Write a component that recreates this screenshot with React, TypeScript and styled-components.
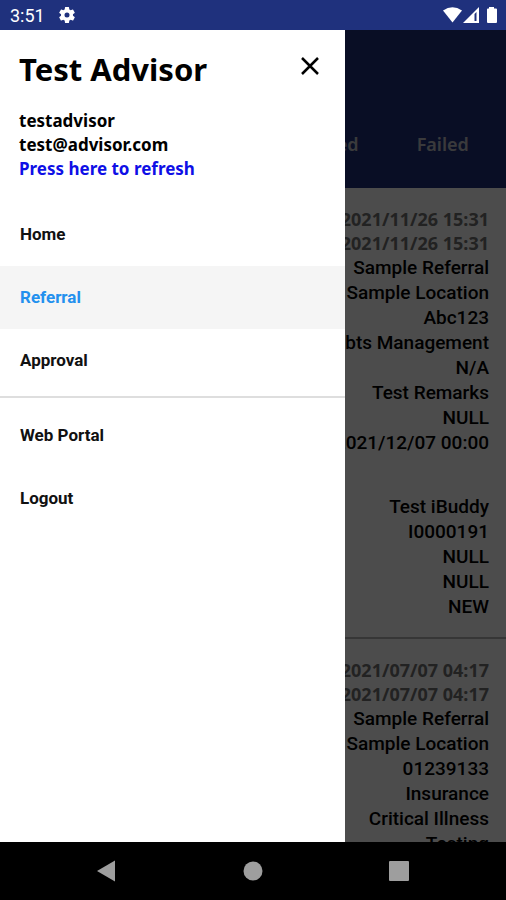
import React from "react";
import styled, { createGlobalStyle } from "styled-components";

const GlobalStyle = createGlobalStyle`
  * { box-sizing: border-box; }
  body { margin: 0; font-family: Roboto, sans-serif; color: #000; }
  h1, p, ul { margin: 0; padding: 0; }
  ul { list-style: none; }
  button { border: 0; padding: 0; background: none; font: inherit; color: inherit; cursor: pointer; }
`;

const Screen = styled.div`
  display: flex;
  flex-direction: column;
  height: 100vh;
  overflow: hidden;
`;

const StatusBar = styled.header`
  flex: none;
  display: flex;
  align-items: center;
  justify-content: space-between;
  height: 30px;
  padding: 0 8px 0 10px;
  background: #1f317d;
  color: #fff;
  font-size: 18px;
`;

const StatusGroup = styled.div<{ $gap: number }>`
  display: flex;
  align-items: center;
  gap: ${(p) => p.$gap}px;
`;

const Stage = styled.div`
  flex: 1;
  min-height: 0;
  display: grid;
  grid-template: minmax(0, 1fr) / minmax(0, 1fr);
`;

const Page = styled.main`
  grid-area: 1 / 1;
  overflow: hidden;
  background: #fff;
`;

const TabBar = styled.div`
  display: grid;
  grid-template-columns: repeat(4, 1fr);
  align-items: end;
  height: 158px;
  padding-bottom: 32px;
  background: #1f317d;
`;

const Tab = styled.button`
  color: #c4c4c8;
  font-family: "Noto Sans", sans-serif;
  font-size: 18px;
  font-weight: 600;
  line-height: 24px;
`;

const Record = styled.article`
  padding: 19px 17px 18px;
  border-bottom: 2px solid #b4b4b4;
  text-align: right;
`;

const Stamp = styled.p`
  color: #737373;
  font-family: "Noto Sans", sans-serif;
  font-size: 18px;
  font-weight: 700;
  line-height: 24px;
`;

const Values = styled.ul`
  font-size: 19px;
  font-weight: 500;
  line-height: 25px;

  & + & { margin-top: 39px; }
`;

const Backdrop = styled.div`
  grid-area: 1 / 1;
  z-index: 1;
  background: rgba(0, 0, 0, 0.7);
`;

const Drawer = styled.aside`
  grid-area: 1 / 1;
  z-index: 2;
  width: 68.2%;
  background: #fff;
`;

const DrawerHead = styled.div`
  display: flex;
  align-items: center;
  justify-content: space-between;
  padding: 16px 22px 0 19px;
`;

const Title = styled.h1`
  font-family: "Noto Sans", sans-serif;
  font-size: 31px;
  font-weight: 700;
  line-height: 46px;
`;

const CloseButton = styled.button`
  display: flex;
  padding-bottom: 6px;
`;

const Account = styled.div`
  display: flex;
  flex-direction: column;
  align-items: flex-start;
  padding: 17px 19px 22px;
  font-family: "Noto Sans", sans-serif;
  font-size: 17px;
  font-weight: 700;
  line-height: 24px;
`;

const RefreshButton = styled.button`
  color: #0f0fe6;
`;

const Menu = styled.nav`
  & + & {
    margin-top: 4px;
    padding-top: 6px;
    border-top: 2px solid #dedede;
  }
`;

const MenuLink = styled.a<{ $active?: boolean }>`
  display: block;
  padding: 20px;
  background: ${(p) => (p.$active ? "#f5f5f5" : "transparent")};
  color: ${(p) => (p.$active ? "#2390ee" : "#111")};
  font-size: 17px;
  font-weight: 700;
  line-height: 23px;
  text-decoration: none;
`;

const SystemNav = styled.footer`
  flex: none;
  display: flex;
  align-items: center;
  justify-content: center;
  gap: 126px;
  height: 58px;
  background: #000;
`;

const SystemButton = styled.button`
  display: flex;
`;

const records = [
  {
    stamps: ["2021/11/26 15:31", "2021/11/26 15:31"],
    groups: [
      ["Sample Referral", "Sample Location", "Abc123", "Debts Management", "N/A", "Test Remarks", "NULL", "2021/12/07 00:00"],
      ["Test iBuddy", "I0000191", "NULL", "NULL", "NEW"],
    ],
  },
  {
    stamps: ["2021/07/07 04:17", "2021/07/07 04:17"],
    groups: [["Sample Referral", "Sample Location", "01239133", "Insurance", "Critical Illness", "Testing"]],
  },
];

const GearIcon = () => (
  <svg width="20" height="20" viewBox="0 0 24 24" fill="#fff" aria-hidden="true">
    <path d="M19.14 12.94c.04-.3.06-.61.06-.94s-.02-.64-.07-.94l2.03-1.58a.49.49 0 0 0 .12-.61l-1.92-3.32a.49.49 0 0 0-.59-.22l-2.39.96a7 7 0 0 0-1.62-.94l-.36-2.54a.48.48 0 0 0-.48-.41h-3.84a.47.47 0 0 0-.47.41l-.36 2.54c-.59.24-1.13.57-1.62.94l-2.39-.96a.48.48 0 0 0-.59.22L2.74 8.87a.47.47 0 0 0 .12.61l2.03 1.58c-.05.3-.09.63-.09.94s.02.64.07.94l-2.03 1.58a.49.49 0 0 0-.12.61l1.92 3.32c.12.22.37.29.59.22l2.39-.96c.5.38 1.03.7 1.62.94l.36 2.54c.05.24.24.41.48.41h3.84c.24 0 .44-.17.47-.41l.36-2.54a7 7 0 0 0 1.62-.94l2.39.96c.22.08.47 0 .59-.22l1.92-3.32a.47.47 0 0 0-.12-.61zM12 15a3 3 0 1 1 0-6 3 3 0 0 1 0 6z" />
  </svg>
);

const StatusIcons = () => (
  <svg width="56" height="20" viewBox="0 0 56 20" fill="#fff" aria-hidden="true">
    <path d="M1 5.500Q10.500-1 20 5.500L10.500 17.500Z" />
    <path fillRule="evenodd" d="M21 18 37 2V18ZM32.500 9V16H34.500V7Z" />
    <path d="M47 3.500V2H52V3.500H54Q55 3.500 55 4.500V17Q55 18 54 18H46Q45 18 45 17V4.500Q45 3.500 46 3.500Z" />
  </svg>
);

export default function App() {
  return (
    <Screen>
      <GlobalStyle />
      <StatusBar>
        <StatusGroup $gap={12}>
          <span>3:51</span>
          <GearIcon />
        </StatusGroup>
        <StatusIcons />
      </StatusBar>
      <Stage>
        <Page>
          <TabBar>
            <Tab>New</Tab>
            <Tab>Pending</Tab>
            <Tab>Approved</Tab>
            <Tab>Failed</Tab>
          </TabBar>
          {records.map((record) => (
            <Record key={record.stamps[0]}>
              {record.stamps.map((stamp, i) => (
                <Stamp key={i}>{stamp}</Stamp>
              ))}
              {record.groups.map((group, g) => (
                <Values key={g}>
                  {group.map((value, i) => (
                    <li key={i}>{value}</li>
                  ))}
                </Values>
              ))}
            </Record>
          ))}
        </Page>
        <Backdrop />
        <Drawer>
          <DrawerHead>
            <Title>Test Advisor</Title>
            <CloseButton aria-label="Close menu">
              <svg width="26" height="26" viewBox="0 0 26 26" fill="none" stroke="#000" strokeWidth="2.500" aria-hidden="true">
                <path d="M5 5 21 21M21 5 5 21" />
              </svg>
            </CloseButton>
          </DrawerHead>
          <Account>
            <p>testadvisor</p>
            <p>test@advisor.com</p>
            <RefreshButton>Press here to refresh</RefreshButton>
          </Account>
          <Menu aria-label="Main">
            <MenuLink href="#home">Home</MenuLink>
            <MenuLink href="#referral" $active aria-current="page">Referral</MenuLink>
            <MenuLink href="#approval">Approval</MenuLink>
          </Menu>
          <Menu aria-label="Account">
            <MenuLink href="#portal">Web Portal</MenuLink>
            <MenuLink href="#logout">Logout</MenuLink>
          </Menu>
        </Drawer>
      </Stage>
      <SystemNav>
        <SystemButton aria-label="Back">
          <svg width="20" height="22" viewBox="0 0 20 22" fill="#9e9e9e"><path d="M0 11 18 0.500V21.500Z" /></svg>
        </SystemButton>
        <SystemButton aria-label="Home screen">
          <svg width="20" height="20" viewBox="0 0 20 20" fill="#9e9e9e"><circle cx="10" cy="10" r="9.500" /></svg>
        </SystemButton>
        <SystemButton aria-label="Recent apps">
          <svg width="20" height="20" viewBox="0 0 20 20" fill="#9e9e9e"><rect width="20" height="20" rx="1" /></svg>
        </SystemButton>
      </SystemNav>
    </Screen>
  );
}
